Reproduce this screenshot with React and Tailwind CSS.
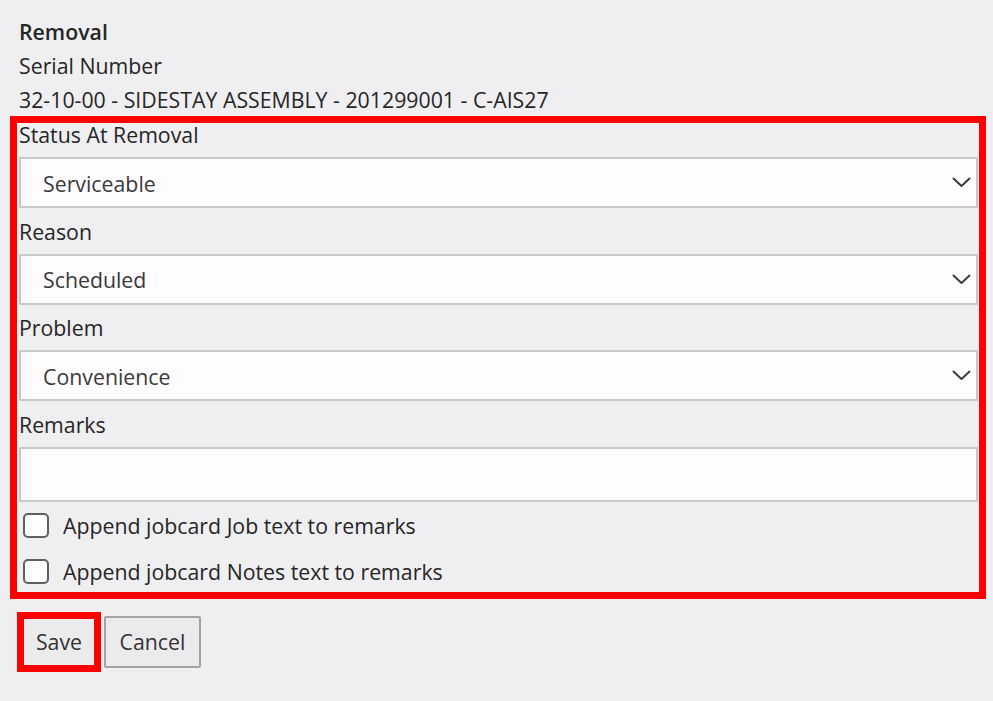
import React from "react";

function Chevron() {
  return (
    <svg width="19" height="11" viewBox="0 0 19 11" fill="none">
      <path d="M1.5 1.5 L9.5 9 L17.5 1.5" stroke="#3c3c3c" strokeWidth="2" strokeLinecap="round" strokeLinejoin="round" />
    </svg>
  );
}

function SelectField({ label, value }) {
  return (
    <div className="mb-[11.67px]">
      <div className="leading-[24px] mb-[10px]">{label}</div>
      <div className="h-[51px] border-2 border-[#c9c8cb] bg-[#fefcff] flex items-center justify-between pl-[22px] pr-[5px]">
        <span className="text-[#3a3a3a] translate-y-px">{value}</span>
        <Chevron />
      </div>
    </div>
  );
}

function CheckRow({ text, className }) {
  return (
    <label className={"flex items-center " + className}>
      <span className="ml-[4px] w-[26px] h-[25px] rounded-[5px] border-2 border-[#5f5f5f] bg-[#fdfcfe]" />
      <span className="ml-[14px] leading-[25px]">{text}</span>
    </label>
  );
}

export default function App() {
  return (
    <div className="min-h-screen bg-[#efeef0] font-['Open_Sans',sans-serif] text-[21.3px] text-[#262626] pl-[10px] pr-[7px] pt-[15px]">
      <div className="pl-[9px] leading-[34px]">
        <div className="font-semibold">Removal</div>
        <div>Serial Number</div>
        <div>32-10-00 - SIDESTAY ASSEMBLY - 201299001 - C-AIS27</div>
      </div>

      <div className="-mt-px border-[7px] border-[#ff0000] pl-[2px] pr-px">
        <SelectField label="Status At Removal" value="Serviceable" />
        <SelectField label="Reason" value="Scheduled" />
        <SelectField label="Problem" value="Convenience" />
        <div>
          <div className="leading-[24px] mb-[10px]">Remarks</div>
          <div className="h-[55px] border-2 border-[#c9c8cb] bg-[#fefcff]" />
        </div>
        <CheckRow text="Append jobcard Job text to remarks" className="mt-[11px]" />
        <CheckRow text="Append jobcard Notes text to remarks" className="mt-[21px] mb-[8px]" />
      </div>

      <div className="flex items-start mt-[13px] ml-[7px]">
        <button className="w-[84px] h-[60px] border-[7px] border-[#ff0000] bg-[#ebeaec] text-[#333] leading-none">
          Save
        </button>
        <button className="ml-[3px] mt-[4px] w-[97px] h-[52px] border-2 border-[#a3a2a5] rounded-[2px] bg-[#ebeaec] text-[#333] leading-none">
          Cancel
        </button>
      </div>
    </div>
  );
}
